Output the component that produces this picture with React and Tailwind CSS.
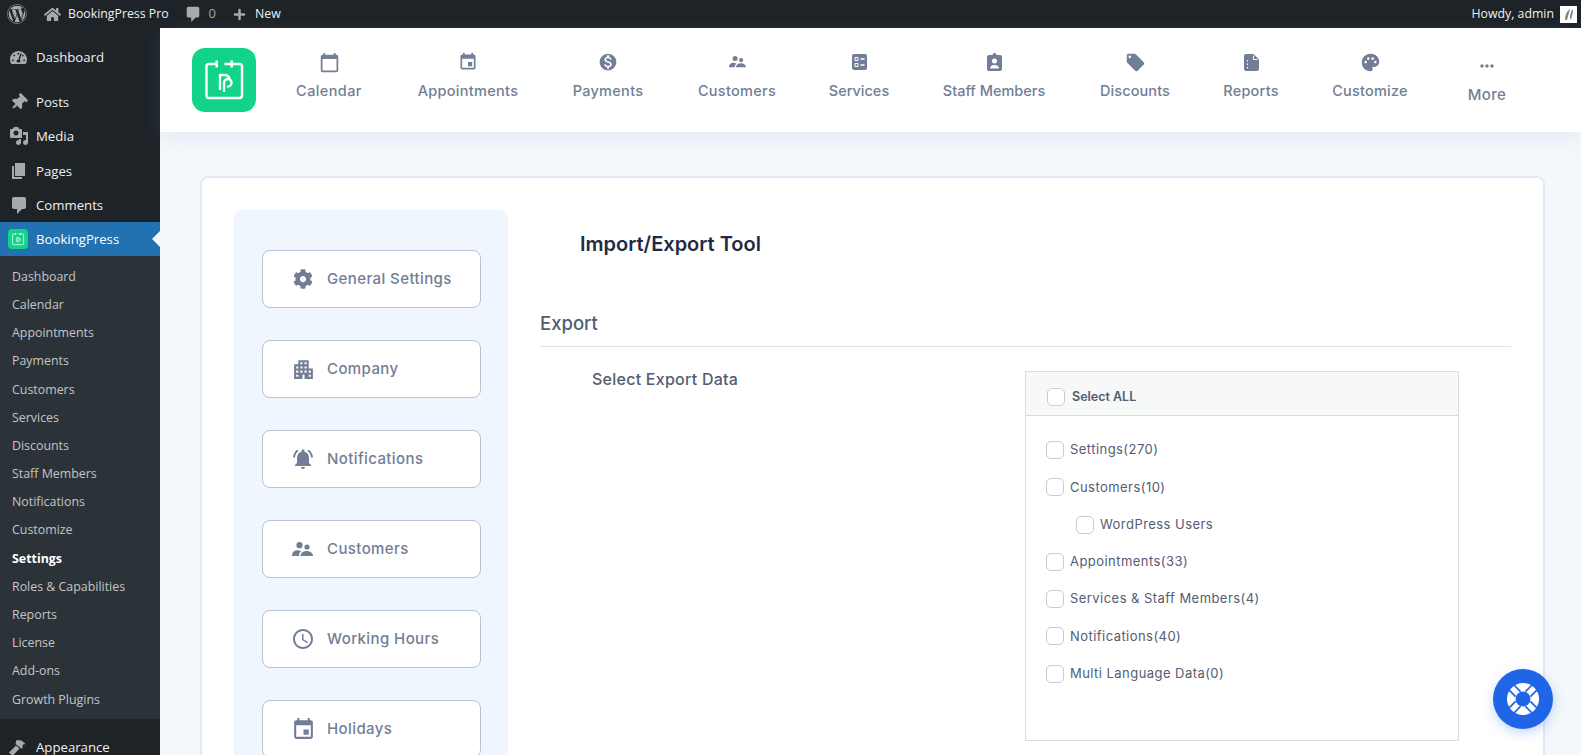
import React from "react";
import { FaWordpress, FaHome, FaPlus, FaThumbtack, FaTachometerAlt, FaCog } from "react-icons/fa";
import { MdCalendarToday, MdEvent, MdMonetizationOn, MdLocalOffer, MdPalette, MdMoreHoriz, MdApartment, MdNotificationsActive, MdAccessTime } from "react-icons/md";

const Logo = ({ size }) => (
  <svg viewBox="0 0 64 64" width={size} height={size}>
    <rect width="64" height="64" rx="13" fill="#12d488" />
    <path d="M24.700 16H17a2.500 2.500 0 0 0-2.500 2.500V47.500A2.500 2.500 0 0 0 17 50H47.500a2.500 2.500 0 0 0 2.500-2.500V18.500A2.500 2.500 0 0 0 47.500 16H32.500" fill="none" stroke="#fff" strokeWidth="2.400" />
    <path d="M24.700 12.500v7M39.700 12.500v7" stroke="#fff" strokeWidth="2.400" />
    <path d="M28 42V27h4c3.500 0 5.500 1.800 5.500 3.800M32 44V34.500a3.800 3.800 0 1 1 3 4" fill="none" stroke="#fff" strokeWidth="2.300" />
  </svg>
);

const Bubble = ({ size, className }) => (
  <svg viewBox="0 0 20 20" width={size} height={size} fill="currentColor" className={className}>
    <path d="M5 2h10c1.100 0 2 .9 2 2v8c0 1.100-.9 2-2 2h-2l-5 5v-5H5c-1.100 0-2-.9-2-2V4c0-1.100.9-2 2-2z" />
  </svg>
);
const MediaIcon = ({ size, className }) => (
  <svg viewBox="0 0 20 20" width={size} height={size} fill="currentColor" className={className}>
    <path d="M13 11V4c0-.55-.45-1-1-1h-1.670L9 1H5L3.670 3H2c-.55 0-1 .45-1 1v7c0 .55.45 1 1 1h10c.55 0 1-.45 1-1zM7 4.500c1.380 0 2.500 1.120 2.500 2.500S8.380 9.500 7 9.500 4.500 8.380 4.500 7 5.620 4.500 7 4.500zM14 6h5v10.500c0 1.380-1.120 2.500-2.500 2.500S14 17.880 14 16.500s1.120-2.500 2.500-2.500c.17 0 .34.020.5.050V9h-3V6zm-4 8.050V13h2v3.500c0 1.380-1.120 2.500-2.500 2.500S7 17.880 7 16.500 8.120 14 9.500 14c.17 0 .34.020.5.050z" />
  </svg>
);
const PagesIcon = ({ size, className }) => (
  <svg viewBox="0 0 20 20" width={size} height={size} fill="currentColor" className={className}>
    <path d="M6 15V2h10v13H6zm-1 1h8v2H3V5h2v11z" />
  </svg>
);
const BrushIcon = ({ size, className }) => (
  <svg viewBox="0 0 20 20" width={size} height={size} fill="currentColor" className={className}>
    <path d="M8.500 3l5 .5 4 3.500c-1 .5-2 .2-2.500 .5l-1 4.500-6.500-5z" />
    <path d="M8 8.500l3.500 3-7 7.500-3.500-3.500z" />
  </svg>
);
const PeopleIcon = ({ w }) => (
  <svg viewBox="0 0 21 14" width={w} fill="currentColor">
    <circle cx="7.500" cy="3.200" r="3.100" />
    <circle cx="15" cy="5" r="2.600" />
    <path d="M0 14c0-3.200 1.800-5.800 5.200-5.800 1.600 0 3 .4 4 1.400-1.500 1-2.200 2.500-2.200 4.400z" />
    <path d="M8.500 14c0-2.800 2.500-5 6.200-5s6.300 2.200 6.300 5z" />
  </svg>
);
const ServicesIcon = () => (
  <svg viewBox="0 0 15 16" width="15" height="16">
    <rect width="15" height="16" rx="2" fill="currentColor" />
    <path d="M3 3.500h3v3H3zM3 9.500h3v3H3z" fill="none" stroke="#fff" strokeWidth="1" />
    <path d="M8.500 5h4M8.500 11h4" stroke="#fff" strokeWidth="1.400" />
  </svg>
);
const StaffIcon = () => (
  <svg viewBox="0 0 15 18" width="15" height="18">
    <path d="M2 2h3.500a2 2 0 0 1 4 0H13a2 2 0 0 1 2 2v12a2 2 0 0 1-2 2H2a2 2 0 0 1-2-2V4a2 2 0 0 1 2-2z" fill="currentColor" />
    <circle cx="7.500" cy="8" r="2.500" fill="#fff" />
    <path d="M3 15.500c0-2.400 2-3.500 4.500-3.500s4.500 1.100 4.500 3.500z" fill="#fff" />
  </svg>
);
const ReportsIcon = () => (
  <svg viewBox="0 0 15 17" width="15" height="17">
    <path d="M2 0h7.500L15 5.500V15a2 2 0 0 1-2 2H2a2 2 0 0 1-2-2V2a2 2 0 0 1 2-2z" fill="currentColor" />
    <path d="M9.500 1.500v4h4" fill="none" stroke="#fff" strokeWidth="1" />
    <path d="M3.500 6v1.500M3.500 9.500V11M3.500 13v1.500" stroke="#fff" strokeWidth="1" />
  </svg>
);

const topNav = [
  ["Calendar", <MdCalendarToday size={21} />, "w-[122px]", "tracking-[0.4px]"],
  ["Appointments", <MdEvent size={20} />, "w-[156px]", "tracking-[0.3px]"],
  ["Payments", <MdMonetizationOn size={20} />, "w-[124px]", "tracking-[0.3px]"],
  ["Customers", <PeopleIcon w={17} />, "w-[134px]", "tracking-[0.3px]"],
  ["Services", <ServicesIcon />, "w-[110px]", "tracking-[0px]"],
  ["Staff Members", <StaffIcon />, "w-[160px]", "tracking-[0px]"],
  ["Discounts", <MdLocalOffer size={21} />, "w-[122px]", "tracking-[0.1px]"],
  ["Reports", <ReportsIcon />, "w-[110px]", "tracking-[0.2px]"],
  ["Customize", <MdPalette size={21} />, "w-[128px]", "tracking-[0.2px]"],
];

const mainMenu = [
  ["Dashboard", <FaTachometerAlt size={17} />, "h-[34px] mb-[11px]"],
  ["Posts", <FaThumbtack size={17} className="rotate-45" />, "h-[34.250px]"],
  ["Media", <MediaIcon size={20} />, "h-[34.250px]"],
  ["Pages", <PagesIcon size={20} />, "h-[34.250px]"],
  ["Comments", <Bubble size={20} />, "h-[34.250px]"],
];

const subMenu = ["Dashboard", "Calendar", "Appointments", "Payments", "Customers", "Services", "Discounts", "Staff Members", "Notifications", "Customize", "Settings", "Roles & Capabilities", "Reports", "License", "Add-ons", "Growth Plugins"];

const settingsNav = [
  ["General Settings", <FaCog size={20} />, "pl-[30px]", "ml-[14px]"],
  ["Company", <MdApartment size={25} />, "pl-[28px]", "ml-[11px]"],
  ["Notifications", <MdNotificationsActive size={24} />, "pl-[28px]", "ml-[12px]"],
  ["Customers", <PeopleIcon w={21} />, "pl-[29px]", "ml-[14px]"],
  ["Working Hours", <MdAccessTime size={24} />, "pl-[28px]", "ml-[12px]"],
  ["Holidays", <MdEvent size={25} />, "pl-[28px]", "ml-[11px]"],
];

const exportItems = [
  ["Settings(270)", false],
  ["Customers(10)", false],
  ["WordPress Users", true],
  ["Appointments(33)", false],
  ["Services & Staff Members(4)", false],
  ["Notifications(40)", false],
  ["Multi Language Data(0)", false],
];

const Check = () => <span className="block w-[18px] h-[18px] shrink-0 rounded-[5px] border border-[#c6cbd6] bg-white" />;

export default function App() {
  return (
    <div className="relative w-[1581px] h-[755px] overflow-hidden flex flex-col bg-[#f4f7fb] font-['Inter',sans-serif]">
      <header className="h-[28px] shrink-0 bg-[#1d2327] flex items-center text-[12.300px] text-[#f0f0f1] font-['Open_Sans',sans-serif]">
        <FaWordpress className="ml-[7px] text-[20px] text-[#a7aaad]" />
        <FaHome className="ml-[17px] text-[17px] text-[#a7aaad]" />
        <span className="ml-[7px]">BookingPress Pro</span>
        <Bubble size={18} className="ml-[15px] text-[#a7aaad]" />
        <span className="ml-[7px] text-[#a7aaad] text-[13px]">0</span>
        <FaPlus className="ml-[17px] text-[13px] text-[#a7aaad]" />
        <span className="ml-[9px]">New</span>
        <span className="ml-auto">Howdy, admin</span>
        <span className="ml-[6px] mr-[4px] w-[17px] h-[17px] bg-white flex items-center justify-center">
          <svg viewBox="0 0 17 17" width="17" height="17">
            <path d="M5 14c0-5 2-9 5-11-1 4-2 7-3 11z" fill="#8a8a6a" />
            <path d="M10 13c0-4 1-8 3-10 0 4-1 7-2 10z" fill="#6b7a8a" />
          </svg>
        </span>
      </header>
      <div className="flex-1 flex min-h-0">
        <aside className="w-[160px] shrink-0 bg-[#1d2327] text-[13.200px] font-['Open_Sans',sans-serif] text-[#f0f0f1] pt-[12px] overflow-hidden">
          {mainMenu.map(([label, icon, cls]) => (
            <div key={label} className={`flex items-center ${cls}`}>
              <span className="w-[36px] flex justify-center pl-[1px] text-[#a7aaad]">{icon}</span>
              <span className="pt-[2px]">{label}</span>
            </div>
          ))}
          <div className="relative h-[34px] bg-[#2271b1] flex items-center text-white">
            <span className="w-[36px] flex justify-center"><Logo size={20} /></span>
            <span className="pt-[2px]">BookingPress</span>
            <span className="absolute right-0 top-[9px] border-y-[8px] border-y-transparent border-r-[8px] border-r-[#f4f7fb]" />
          </div>
          <div className="bg-[#2c3338] pt-[7px] h-[463px]">
            {subMenu.map((s) => (
              <div key={s} className={`h-[28.200px] flex items-center pl-[12px] text-[12.400px] ${s === "Settings" ? "font-bold text-white" : "text-[#c3c4c7]"}`}>{s}</div>
            ))}
          </div>
          <div className="flex items-center h-[34px] mt-[11px]">
            <span className="w-[36px] flex justify-center text-[#a7aaad]"><BrushIcon size={20} /></span>
            <span className="pt-[2px]">Appearance</span>
          </div>
        </aside>
        <main className="flex-1 min-w-0 flex flex-col">
          <nav className="h-[104px] shrink-0 bg-white shadow-[0_4px_20px_rgba(136,150,200,0.15)] flex pl-[32px] pt-[20px] relative">
            <Logo size={64} />
            <div className="flex ml-[12px] items-start">
              {topNav.map(([label, icon, w, tr]) => (
                <div key={label} className={`${w} flex flex-col items-center text-[#727e95]`}>
                  <span className="h-[28px] flex items-center">{icon}</span>
                  <span className={`text-[14.500px] font-medium mt-[4px] ${tr} leading-[21px]`}>{label}</span>
                </div>
              ))}
              <div className="w-[106px] flex flex-col items-center text-[#727e95]">
                <span className="h-[36px] flex items-center"><MdMoreHoriz size={20} /></span>
                <span className="text-[15px] font-medium leading-[22px] tracking-[0.3px]">More</span>
              </div>
            </div>
          </nav>
          <div className="flex-1 min-h-0 pl-[40px] pr-[36px] pt-[44px]">
            <div className="h-[600px] bg-white border-2 border-[#e2e8f6] rounded-[8px] flex pl-[32px] pt-[32px] pr-[32px]">
              <section className="w-[274px] h-[600px] shrink-0 bg-[#f0f6fe] rounded-[8px] pt-[40px] pl-[28px]">
                {settingsNav.map(([label, icon, pad, gap]) => (
                  <div key={label} className={`w-[219px] h-[58px] mb-[32px] bg-white border border-[#b9c1d4] rounded-[8px] flex items-center ${pad} text-[#727e95]`}>
                    <span className="shrink-0">{icon}</span>
                    <span className={`${gap} text-[15px] font-medium tracking-[0.4px]`}>{label}</span>
                  </div>
                ))}
              </section>
              <section className="flex-1 min-w-0 pl-[32px]">
                <h1 className="ml-[40px] mt-[24px] text-[20px] font-semibold text-[#1f2a44] leading-[20px]">Import/Export Tool</h1>
                <h2 className="mt-[57px] text-[18.500px] font-medium text-[#535d71] leading-[24px]">Export</h2>
                <div className="mt-[11px] border-t border-[#dde1e8]" />
                <div className="flex mt-[24px]">
                  <span className="ml-[52px] w-[433px] text-[16px] font-medium text-[#535d71] leading-[20px] mt-[-2px] tracking-[0.25px]">Select Export Data</span>
                  <div className="w-[434px] h-[370px] border border-[#d9dbde]">
                    <div className="h-[44px] bg-[#f7f8f8] border-b border-[#d9dbde] flex items-center pl-[21px] pt-[7px] gap-[7px]">
                      <Check />
                      <span className="text-[12.500px] font-semibold text-[#535d71]">Select ALL</span>
                    </div>
                    <div className="pl-[20px] pt-[25px] text-[13px] text-[#535d71] tracking-[0.45px]">
                      {exportItems.map(([label, nested]) => (
                        <div key={label} className={`h-[18px] mb-[19.300px] flex items-center gap-[6px] ${nested ? "ml-[30px]" : ""}`}>
                          <Check />
                          <span>{label}</span>
                        </div>
                      ))}
                    </div>
                  </div>
                </div>
              </section>
            </div>
          </div>
        </main>
      </div>
      <button className="absolute left-[1493px] top-[669px] w-[60px] h-[60px] rounded-full bg-[#1f65e6] shadow-[0_4px_12px_rgba(31,101,230,0.25)] flex items-center justify-center">
        <svg viewBox="-17 -17 34 34" width="34" height="34">
          <circle r="16" fill="#fff" />
          <circle r="7.500" fill="#1f65e6" />
          {[45, 135, 225, 315].map((a) => (
            <g key={a} transform={`rotate(${a})`} stroke="#1f65e6" strokeWidth="1.700">
              <path d="M-3.500 -7V-17M3.500 -7V-17" />
            </g>
          ))}
        </svg>
      </button>
    </div>
  );
}
